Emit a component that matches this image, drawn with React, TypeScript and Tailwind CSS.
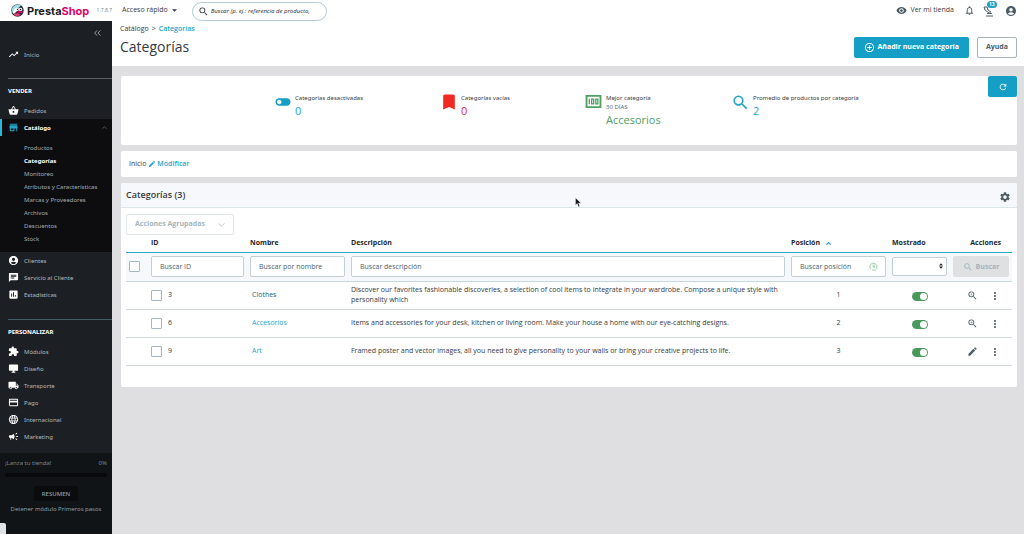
import React from "react";
import {
  MdAccountCircle,
  MdAddCircleOutline,
  MdAssessment,
  MdBookmark,
  MdCampaign,
  MdChat,
  MdCreditCard,
  MdDesktopWindows,
  MdEdit,
  MdExtension,
  MdLanguage,
  MdLocalShipping,
  MdMoreVert,
  MdNotificationsNone,
  MdRefresh,
  MdRemoveRedEye,
  MdSearch,
  MdSettings,
  MdShoppingBasket,
  MdStore,
  MdToggleOff,
  MdTrendingUp,
  MdZoomIn,
} from "react-icons/md";

const catalogLinks = [
  "Productos",
  "Categorías",
  "Monitoreo",
  "Atributos y Características",
  "Marcas y Proveedores",
  "Archivos",
  "Descuentos",
  "Stock",
];

const sellLinks = [
  { label: "Clientes", icon: MdAccountCircle },
  { label: "Servicio al Cliente", icon: MdChat },
  { label: "Estadísticas", icon: MdAssessment },
];

const customizeLinks = [
  { label: "Módulos", icon: MdExtension },
  { label: "Diseño", icon: MdDesktopWindows },
  { label: "Transporte", icon: MdLocalShipping },
  { label: "Pago", icon: MdCreditCard },
  { label: "Internacional", icon: MdLanguage },
  { label: "Marketing", icon: MdCampaign },
];

const categories = [
  {
    id: 3,
    name: "Clothes",
    nameColor: "text-[#1d6577]",
    description:
      "Discover our favorites fashionable discoveries, a selection of cool items to integrate in your wardrobe. Compose a unique style with personality which",
    position: 1,
    icon: MdZoomIn,
    action: "Ver",
  },
  {
    id: 6,
    name: "Accesorios",
    nameColor: "text-[#25a5c9]",
    description:
      "Items and accessories for your desk, kitchen or living room. Make your house a home with our eye-catching designs.",
    position: 2,
    icon: MdZoomIn,
    action: "Ver",
  },
  {
    id: 9,
    name: "Art",
    nameColor: "text-[#25a5c9]",
    description:
      "Framed poster and vector images, all you need to give personality to your walls or bring your creative projects to life.",
    position: 3,
    icon: MdEdit,
    action: "Editar",
  },
];

const inputClass =
  "block h-[21px] w-full rounded-xs border border-[#c3cfd3] bg-white px-2 text-[7px] text-[#363a41] placeholder:text-[#4b626c]";

const checkboxClass =
  "block size-[11px] shrink-0 appearance-none rounded-[1px] border border-[#a3b8c0] bg-white checked:bg-[#25b9d7]";

function Logo() {
  return (
    <a href="#" className="flex items-center gap-[3px]">
      <svg viewBox="0 0 26 26" className="size-[13px]">
        <circle cx="13" cy="13" r="12.5" fill="#23303a" />
        <path d="M3 7 A12 12 0 0 1 20 3 L15 8 L7 11 L2 17 A12 12 0 0 1 3 7Z" fill="#a5dbe8" />
        <path d="M5 12 Q9 6 15 8 L16 12 L11 15 L6 20 L3 17Z" fill="#f5fbfd" />
        <circle cx="12" cy="11" r="3.2" fill="#fff" />
        <circle cx="19" cy="11" r="3.6" fill="#fff" />
        <circle cx="13" cy="11" r="1.4" fill="#14181c" />
        <circle cx="19" cy="11" r="1.6" fill="#14181c" />
        <path d="M12 15 Q18 12 24 16 Q20 20 15 18Z" fill="#df0067" />
        <path d="M6 20 Q11 17 19 21 Q13 27 6 22Z" fill="#e9376f" />
      </svg>
      <span className="font-[Inter,sans-serif] text-[11px] leading-4 font-bold">
        <span className="text-[#1d1d1b]">Presta</span>
        <span className="text-[#df0067]">Shop</span>
      </span>
    </a>
  );
}

function Topbar() {
  return (
    <header className="flex h-[21px] items-center bg-white">
      <div className="flex w-[112px] items-center justify-between pl-[11px]">
        <Logo />
        <span className="text-[5px] text-[#6c868e]">1.7.8.7</span>
      </div>
      <button className="ml-[10px] flex items-center gap-1 text-[7px] text-[#363a41]">
        Acceso rápido
        <svg viewBox="0 0 8 4" className="h-[3px] w-[5px]">
          <path d="M0 0H8L4 4Z" fill="#363a41" />
        </svg>
      </button>
      <form className="mt-[2px] ml-[15px] flex h-[19px] w-[135px] items-center rounded-full border border-[#b4cbd1] bg-white px-[5px]">
        <MdSearch className="size-[11px] shrink-0 text-[#363a41]" />
        <input
          aria-label="Buscar"
          placeholder="Buscar (p. ej.: referencia de producto,"
          className="min-w-0 flex-1 pl-[2px] font-['Noto_Sans',sans-serif] text-[6px] italic placeholder:text-[#363a41]"
        />
      </form>
      <div className="mr-[7px] ml-auto flex items-center text-[#4c5c64]">
        <a href="#" className="flex items-center gap-[3px] text-[7px] text-[#363a41]">
          <MdRemoveRedEye className="size-[11px] text-[#4c5c64]" />
          Ver mi tienda
        </a>
        <button aria-label="Notificaciones" className="ml-[10px]">
          <MdNotificationsNone className="size-[11px]" />
        </button>
        <button aria-label="Trofeos" className="relative ml-2">
          <svg viewBox="0 0 12 12" className="size-[12px]" fill="none" stroke="#4c5c64">
            <path d="M1 2 L4 2 L5 5 L8 7 M1 2 L2 5 L6 8 M4 8.500 H9 M3 11 H10 M7 7 V9" />
          </svg>
          <span className="absolute -top-1 left-[4px] rounded-full bg-[#25a0c2] px-[2px] text-[5px] leading-[7px] font-bold text-white">
            13
          </span>
        </button>
        <button aria-label="Perfil" className="ml-[10px]">
          <MdAccountCircle className="size-[12px]" />
        </button>
      </div>
    </header>
  );
}

function NavLink({ label, icon: Icon }: { label: string; icon: React.ElementType }) {
  return (
    <li>
      <a href="#" className="flex h-[17px] items-center gap-[5px] pl-2 text-[#b4babf]">
        <Icon className="size-[11px] text-white" />
        {label}
      </a>
    </li>
  );
}

function Sidebar() {
  return (
    <nav className="flex w-[112px] shrink-0 flex-col bg-[#1c1f23] font-['Noto_Sans',sans-serif] text-[6px] leading-[10px] text-[#b4babf]">
      <button
        aria-label="Contraer menú"
        className="mt-[9px] mr-[11px] self-end text-[#a9b3b8]"
      >
        <svg viewBox="0 0 8 7" className="h-[6px] w-[7px]" fill="none" stroke="currentColor">
          <path d="M3.500 .5 L.7 3.500 L3.500 6.500 M7.300 .5 L4.500 3.500 L7.300 6.500" />
        </svg>
      </button>
      <ul className="mt-[10px]">
        <NavLink label="Inicio" icon={MdTrendingUp} />
      </ul>
      <hr className="mt-[15px] ml-2 border-[#5c6063]" />
      <h2 className="mt-[7px] pl-2 font-bold text-white">VENDER</h2>
      <ul className="mt-[6px]">
        <NavLink label="Pedidos" icon={MdShoppingBasket} />
        <li className="h-[133px] bg-[#0d0d0f]">
          <a
            href="#"
            className="flex h-[17px] items-center gap-[5px] border-l-2 border-[#25b9d7] pl-[6px] font-bold text-white"
          >
            <MdStore className="size-[11px] text-[#25a5c9]" />
            Catálogo
            <svg viewBox="0 0 8 5" className="mr-[5px] ml-auto h-[3px] w-[5px]" fill="none" stroke="#6c868e">
              <path d="M.5 4.500 L4 1 L7.500 4.500" />
            </svg>
          </a>
          <ul className="pt-[6px] pl-6">
            {catalogLinks.map((label) => (
              <li key={label} className="h-[13px] leading-[13px]">
                <a
                  href="#"
                  className={label === "Categorías" ? "font-bold text-white" : "text-[#a6acb1]"}
                >
                  {label}
                </a>
              </li>
            ))}
          </ul>
        </li>
        {sellLinks.map((link) => (
          <NavLink key={link.label} {...link} />
        ))}
      </ul>
      <hr className="mt-4 ml-2 border-[#3f5f68]" />
      <h2 className="mt-[7px] pl-2 font-bold text-white">PERSONALIZAR</h2>
      <ul className="mt-[6px]">
        {customizeLinks.map((link) => (
          <NavLink key={link.label} {...link} />
        ))}
      </ul>
      <div className="mt-2 flex flex-1 flex-col bg-[#101417] px-[5px] pt-[5px] text-[#7d878c]">
        <div className="flex justify-between">
          <span>¡Lanza tu tienda!</span>
          <span>0%</span>
        </div>
        <div className="mt-[5px] h-1 rounded-full bg-[#08090a]" />
        <button className="mt-[9px] h-[15px] self-center rounded-xs bg-[#0a0b0d] px-2 font-medium text-[#98a0a5]">
          RESUMEN
        </button>
        <a href="#" className="mt-[3px] text-center font-['Open_Sans',sans-serif] text-[#98a5ae]">
          Detener módulo Primeros pasos
        </a>
        <span className="mt-auto -ml-[5px] h-[11px] w-[6px] rounded-tr-xs bg-[#dfe3e5]" />
      </div>
    </nav>
  );
}

function PageHeader() {
  return (
    <div className="flex h-[45px] justify-between bg-white pr-[7px] pl-2">
      <div>
        <div className="mt-[3px] text-[7px] leading-[10px] text-[#363a41]">
          <a href="#">Catálogo</a>
          <span className="mx-[3px]">&gt;</span>
          <a href="#" className="font-semibold text-[#25a5c9]">
            Categorías
          </a>
        </div>
        <h1 className="mt-1 text-[14px] leading-[18px] text-[#363a41]">Categorías</h1>
      </div>
      <div className="mt-4 flex h-[21px] gap-2 text-[7px] font-bold">
        <button className="flex items-center gap-[3px] rounded-xs bg-[#159fc6] px-[10px] text-white">
          <MdAddCircleOutline className="size-[11px]" />
          Añadir nueva categoría
        </button>
        <button className="rounded-xs border border-[#a9b3b8] bg-white px-2 text-[#4c5c64]">
          Ayuda
        </button>
      </div>
    </div>
  );
}

function Kpi({
  icon,
  title,
  subtitle,
  children,
}: {
  icon: React.ReactNode;
  title: string;
  subtitle?: string;
  children: React.ReactNode;
}) {
  return (
    <div className="flex gap-1">
      <div className="flex w-[17px] justify-center">{icon}</div>
      <div>
        <p className="font-['Noto_Sans',sans-serif] text-[6px] leading-[10px] text-[#363a41]">{title}</p>
        {subtitle && <p className="text-[6px] leading-[9px] text-[#4b5d66]">{subtitle}</p>}
        {children}
      </div>
    </div>
  );
}

function Kpis() {
  return (
    <section className="flex h-[69px] rounded-xs bg-white">
      <div className="grid flex-1 grid-cols-[166px_145px_147px_auto] pt-[17px] pl-[153px]">
        <Kpi
          icon={<MdToggleOff className="size-[18px] shrink-0 text-[#159fc6]" />}
          title="Categorías desactivadas"
        >
          <p className="text-[11px] leading-4 text-[#25a5c9]">0</p>
        </Kpi>
        <Kpi
          icon={<MdBookmark className="-mt-px size-[20px] shrink-0 text-[#f12a22]" />}
          title="Categorías vacías"
        >
          <p className="text-[11px] leading-4 text-[#e0274f]">0</p>
        </Kpi>
        <Kpi
          icon={
            <svg viewBox="0 0 17 14" className="mt-[2px] h-[13px] w-[17px] shrink-0" fill="none" stroke="#4f9f62">
              <path strokeWidth="2" d="M1 1H16V13H1Z" />
              <path strokeWidth="1.400" d="M4 4V10 M6.500 4.500H8.700V9.500H6.500Z M11 4.500H13.200V9.500H11Z" />
            </svg>
          }
          title="Mejor categoría"
          subtitle="30 DÍAS"
        >
          <p className="text-[11px] leading-4 text-[#4f9f62]">Accesorios</p>
        </Kpi>
        <Kpi
          icon={<MdSearch className="size-[19px] shrink-0 text-[#25a5c9]" />}
          title="Promedio de productos por categoría"
        >
          <p className="text-[11px] leading-4 text-[#25a5c9]">2</p>
        </Kpi>
      </div>
      <button
        aria-label="Refrescar"
        className="flex h-[21px] w-[29px] items-center justify-center rounded-xs bg-[#159fc6] text-white"
      >
        <MdRefresh className="size-[10px]" />
      </button>
    </section>
  );
}

function CategoryTable() {
  return (
    <table className="w-full table-fixed border-collapse text-left text-[7px] leading-[10px] text-[#363a41]">
      <colgroup>
        <col className="w-[22px]" />
        <col className="w-[99px]" />
        <col className="w-[101px]" />
        <col />
        <col className="w-[101px]" />
        <col className="w-[61px]" />
        <col className="w-[62px]" />
      </colgroup>
      <thead>
        <tr className="h-[17px] border-b border-[#2ba9c9] font-bold text-[#23272d]">
          <th />
          <th className="px-[3px]">ID</th>
          <th className="px-[3px]">Nombre</th>
          <th className="px-[3px]">Descripción</th>
          <th className="px-[3px]">
            <span className="flex items-center gap-[6px]">
              Posición
              <svg viewBox="0 0 8 5" className="h-[3px] w-[5px]" fill="none" stroke="#25a5c9" strokeWidth="2">
                <path d="M.5 4.500 L4 1 L7.500 4.500" />
              </svg>
            </span>
          </th>
          <th className="px-[3px]">Mostrado</th>
          <th className="pr-[11px] text-right">Acciones</th>
        </tr>
        <tr className="h-[29px] border-b border-[#c5d8df] bg-[#f6f8fc]">
          <td className="px-[3px]">
            <input type="checkbox" aria-label="Seleccionar todo" className={checkboxClass} />
          </td>
          <td className="px-[3px]">
            <input aria-label="Buscar ID" placeholder="Buscar ID" className={inputClass} />
          </td>
          <td className="px-[3px]">
            <input aria-label="Buscar por nombre" placeholder="Buscar por nombre" className={inputClass} />
          </td>
          <td className="px-[3px]">
            <input aria-label="Buscar descripción" placeholder="Buscar descripción" className={inputClass} />
          </td>
          <td className="px-[3px]">
            <div className="relative">
              <input aria-label="Buscar posición" placeholder="Buscar posición" className={inputClass} />
              <svg viewBox="0 0 10 10" className="absolute top-[6px] right-2 size-[9px]" fill="none" stroke="#8ccfa0">
                <path d="M2 8 A4 4 0 1 1 8.500 7 M3.500 9 H7 L9 7" />
                <path d="M4 3.500 H6.500 M4 5 H6.500 M5 6.500 H6.500" />
              </svg>
            </div>
          </td>
          <td className="px-[3px]">
            <div className="relative">
              <select
                aria-label="Mostrado"
                className="block h-[19px] w-full appearance-none rounded-xs border border-[#c3cfd3] bg-white"
              >
                <option></option>
                <option>Sí</option>
                <option>No</option>
              </select>
              <svg viewBox="0 0 6 8" className="pointer-events-none absolute top-[6px] right-1 h-[6px] w-[4px]">
                <path d="M0 3.200 L3 0 L6 3.200Z M0 4.800 L3 8 L6 4.800Z" fill="#23272d" />
              </svg>
            </div>
          </td>
          <td className="px-[3px]">
            <button className="flex h-[21px] w-full items-center justify-center gap-[3px] rounded-xs bg-[#dfe0e2] text-[7px] font-bold text-[#a3b5bc]">
              <MdSearch className="size-[10px]" />
              Buscar
            </button>
          </td>
        </tr>
      </thead>
      <tbody>
        {categories.map((cat) => (
          <tr key={cat.id} className="h-7 border-b border-[#d3d8da]">
            <td />
            <td className="px-[3px]">
              <label className="flex items-center gap-[6px]">
                <input type="checkbox" className={checkboxClass} />
                {cat.id}
              </label>
            </td>
            <td className="px-[5px]">
              <a href="#" className={cat.nameColor}>
                {cat.name}
              </a>
            </td>
            <td className="px-[3px]">{cat.description}</td>
            <td className="text-center">{cat.position}</td>
            <td>
              <label className="mx-auto mt-[2px] flex h-[9px] w-4 items-center justify-end rounded-full bg-[#4a9a5d] p-px">
                <input
                  type="checkbox"
                  role="switch"
                  defaultChecked
                  aria-label={`Mostrar ${cat.name}`}
                  className="size-[7px] appearance-none rounded-full bg-white"
                />
              </label>
            </td>
            <td>
              <div className="flex items-center justify-end gap-[11px] pr-[11px] text-[#4c5c64]">
                <button aria-label={cat.action}>
                  <cat.icon className="size-[11px]" />
                </button>
                <button aria-label="Más acciones">
                  <MdMoreVert className="mt-[2px] size-[12px]" />
                </button>
              </div>
            </td>
          </tr>
        ))}
      </tbody>
    </table>
  );
}

function CategoryPanel() {
  return (
    <section className="rounded-xs bg-white pb-[21px]">
      <div className="flex h-[25px] items-center justify-between rounded-t-xs border-b border-[#dbe6e9] bg-[#f6f8fc] pr-[6px] pl-[5px]">
        <h2 className="text-[9px] font-semibold text-[#363a41]">Categorías (3)</h2>
        <button aria-label="Configuración">
          <MdSettings className="mt-[3px] size-[12px] text-[#4c5c64]" />
        </button>
      </div>
      <div className="px-[5px] pt-[6px]">
        <button className="flex h-[21px] w-[108px] items-center justify-between rounded-xs border border-[#e0e6e8] px-2 text-[7px] font-bold text-[#a3b5bc]">
          Acciones Agrupadas
          <svg viewBox="0 0 8 5" className="h-[4px] w-[7px]" fill="none" stroke="currentColor">
            <path d="M.5 .5 L4 4 L7.500 .5" />
          </svg>
        </button>
        <CategoryTable />
      </div>
    </section>
  );
}

export default function App() {
  return (
    <div className="flex min-h-screen flex-col bg-[#dfdfe1] font-['Open_Sans',sans-serif]">
      <Topbar />
      <div className="flex flex-1">
        <Sidebar />
        <main className="min-w-0 flex-1">
          <PageHeader />
          <div className="flex flex-col gap-[6px] pt-[10px] pr-[7px] pl-[9px]">
            <Kpis />
            <section className="flex h-[26px] items-center gap-[2px] rounded-xs bg-white px-2 text-[7px] text-[#363a41]">
              Inicio
              <a href="#" className="flex items-center gap-px font-semibold text-[#25a5c9]">
                <MdEdit className="size-2" />
                Modificar
              </a>
            </section>
            <CategoryPanel />
          </div>
        </main>
      </div>
      <svg viewBox="0 0 8 12" className="pointer-events-none absolute top-[197px] left-[575px] h-[11px] w-[7px]">
        <path d="M.5 .5 V9 L2.500 7.200 L4 11 L5.500 10.400 L4 6.800 H7Z" fill="#15181b" stroke="#fff" strokeWidth=".5" />
      </svg>
    </div>
  );
}
